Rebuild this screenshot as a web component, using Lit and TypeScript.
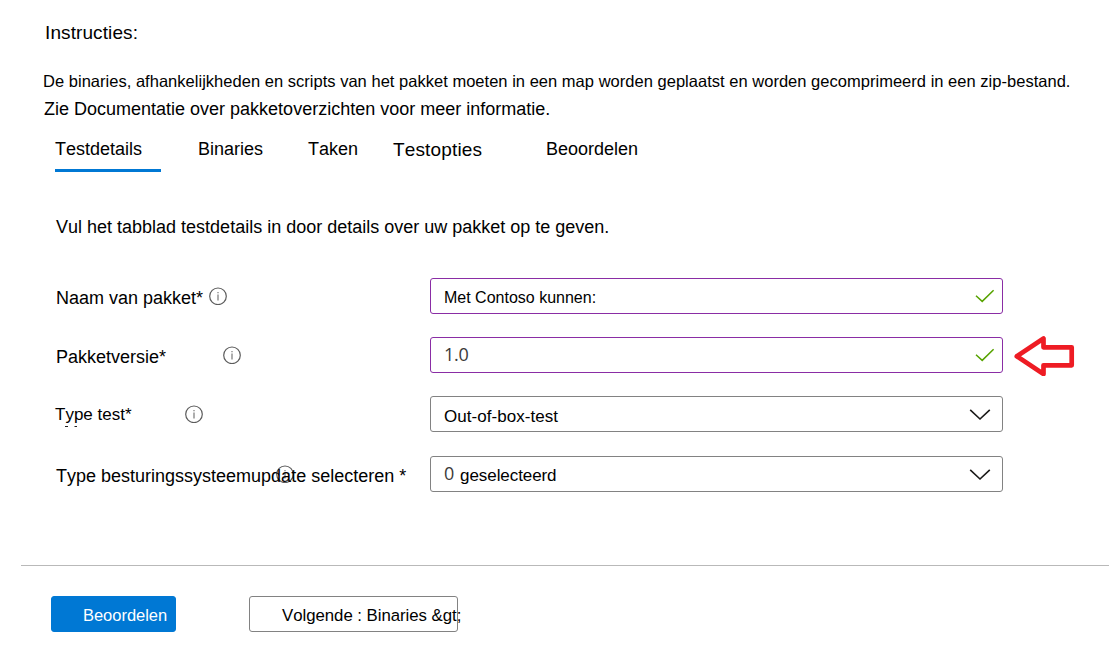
import { LitElement, html, css, svg } from "lit";
import { customElement, property } from "lit/decorators.js";

@customElement("info-icon")
class InfoIcon extends LitElement {
  static styles = css`
    :host { display: block; width: 18px; height: 18px; flex: none; }
    svg { display: block; }
  `;
  render() {
    return html`<svg width="18" height="18" viewBox="0 0 18 18" fill="none">
      <circle cx="9" cy="9.3" r="8.3" stroke="#5c5c5c" stroke-width="1.2" />
      <path d="M9 7.6V13.4" stroke="#8a8a8a" stroke-width="1.4" />
      <path d="M9 5V6.3" stroke="#8a8a8a" stroke-width="1.4" />
    </svg>`;
  }
}

@customElement("field-box")
class FieldBox extends LitElement {
  @property() kind = "valid";
  static styles = css`
    :host { display: block; width: 573px; flex: none; }
    .box {
      box-sizing: border-box; height: 36px; display: flex; justify-content: space-between;
      padding-left: 13px; border: 1px solid #828282; border-radius: 3px; background: #fff;
    }
    .valid { border-color: #8a2da5; }
    .icon { display: block; flex: none; }
  `;
  render() {
    const valid = this.kind === "valid";
    return html`<div class="box ${valid ? "valid" : ""}">
      <slot></slot>
      <svg class="icon" width="40" height="34" viewBox="0 0 40 34" fill="none">
        ${valid
          ? svg`<path d="M14 16.8L20.2 22.4L31.6 11.2" stroke="#57a300" stroke-width="1.5" />`
          : svg`<path d="M8.2 12.8L18 22L27.8 12.8" stroke="#1b1a19" stroke-width="1.6" />`}
      </svg>
    </div>`;
  }
}

@customElement("app-root")
class AppRoot extends LitElement {
  static styles = css`
    :host {
      display: block; height: 657px; overflow: hidden; background: #fff; color: #000;
      font: 18px/20px "Liberation Sans", Arial, sans-serif;
      font-kerning: none; white-space: pre;
    }
    .page { display: flex; flex-direction: column; padding-top: 23px; }
    .heading { padding-left: 45px; font-size: 19px; letter-spacing: 0.1px; }
    .intro { padding: 28px 0 0 43px; font-size: 16.5px; letter-spacing: 0.022px; }
    .see { padding: 8px 0 0 44px; }
    .tabs { display: flex; height: 33px; margin: 20px 0 0 55px; }
    .tab { flex: none; }
    .details { width: 106px; margin-right: 37px; border-bottom: 3px solid #0078d4; box-sizing: border-box; }
    .binaries { width: 110px; }
    .tasks { width: 85px; }
    .options { width: 153px; padding-top: 1px; font-size: 19px; letter-spacing: 0.15px; }
    .lead { padding: 45px 0 0 56px; }
    .form { display: flex; flex-direction: column; margin-top: 41px; }
    .row { display: flex; height: 36px; padding-left: 56px; margin-bottom: 23px; }
    .row.kind { margin-bottom: 24px; }
    .label { display: flex; position: relative; width: 374px; flex: none; }
    .label span { padding-top: 10px; }
    .label .w1 { width: 153px; }
    .label .w2 { width: 167px; }
    .label .w3 { width: 130px; margin-left: -1px; padding-top: 9px; font-size: 17px; }
    .label info-icon { margin-top: 9px; }
    .label .under { position: absolute; left: 220px; top: 0; }
    .label .over { position: relative; }
    .marks { position: absolute; left: 8px; top: 29px; }
    .value { font-size: 17px; padding-top: 9px; }
    .type { padding-top: 10px; letter-spacing: 0.05px; }
    .name { font-size: 16px; }
    .num { font: 18px/20px "Open Sans", sans-serif; color: #3b3a39; letter-spacing: -0.2px; padding-top: 6px; }
    .count { display: flex; gap: 6px; }
    .count .value { letter-spacing: -0.08px; }
    .arrow { display: block; flex: none; margin: -3px 0 -3px 9px; }
    .footer { display: flex; margin: 50px 0 0 21px; padding: 30px 0 0 30px; border-top: 1px solid #b9b9b9; }
    .btn {
      box-sizing: border-box; height: 36px; border-radius: 3px; border: 1px solid #828282;
      padding: 9px 0 0 32px; font: 16.8px/20px "Liberation Sans", Arial, sans-serif;
      font-kerning: none; letter-spacing: -0.03px; color: #000; background: #fff;
    }
    .primary { width: 125px; padding: 8px 0 0 31px; font-size: 16.5px; background: #0078d4; border-color: #0078d4; color: #fff; margin-right: 73px; }
    .next { width: 209px; }
  `;

  render() {
    return html`<div class="page"
      ><div class="heading">Instructies:</div
      ><div class="intro">De binaries, afhankelijkheden en scripts van het pakket moeten in een map worden geplaatst en worden gecomprimeerd in een zip-bestand.</div
      ><div class="see">Zie Documentatie over pakketoverzichten voor meer informatie.</div
      ><nav class="tabs"
        ><div class="tab details">Testdetails</div
        ><div class="tab binaries">Binaries</div
        ><div class="tab tasks">Taken</div
        ><div class="tab options">Testopties</div
        ><div class="tab">Beoordelen</div
      ></nav
      ><div class="lead">Vul het tabblad testdetails in door details over uw pakket op te geven.</div
      ><div class="form"
        ><div class="row"
          ><div class="label"><span class="w1">Naam van pakket*</span><info-icon></info-icon></div
          ><field-box kind="valid"><div class="value name">Met Contoso kunnen:</div></field-box
        ></div
        ><div class="row"
          ><div class="label"><span class="w2">Pakketversie*</span><info-icon></info-icon></div
          ><field-box kind="valid"><div class="num">1.0</div></field-box
          ><svg class="arrow" width="64" height="42" viewBox="0 0 64 42" fill="none"
            ><path d="M4.8 22.3L31.5 4.5V13.3H59.7V31.3H31.5V40L4.8 22.3Z" stroke="#ee1c24" stroke-width="4.7" stroke-linejoin="round"
          /></svg
        ></div
        ><div class="row kind"
          ><div class="label"
            ><span class="w3">Type test*</span><info-icon></info-icon
            ><svg class="marks" width="16" height="3" viewBox="0 0 16 3"
              ><path d="M1 1.5H4M10.5 1.5H13" stroke="#222" stroke-width="1"
            /></svg
          ></div
          ><field-box kind="select"><div class="value type">Out-of-box-test</div></field-box
        ></div
        ><div class="row"
          ><div class="label"
            ><info-icon class="under"></info-icon
            ><span class="over">Type besturingssysteemupdate selecteren *</span
          ></div
          ><field-box kind="select"><div class="count"><span class="num">0</span><span class="value">geselecteerd</span></div></field-box
        ></div
      ></div
      ><div class="footer"
        ><div class="btn primary">Beoordelen</div
        ><div class="btn next">Volgende : Binaries ${"&gt;"}</div
      ></div
    ></div>`;
  }
}
